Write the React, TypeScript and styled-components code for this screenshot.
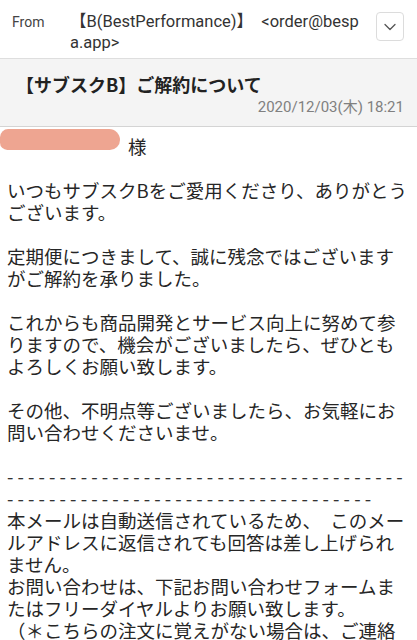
import React from "react"
import styled, { createGlobalStyle } from "styled-components"

const GlobalStyle = createGlobalStyle`
  html, body {
    margin: 0;
    padding: 0;
    background: #fff;
  }
  body {
    font-family: Roboto, "Noto Sans CJK JP", sans-serif;
    color: #222;
  }
`

const Page = styled.div`
  width: 417px;
  height: 640px;
  overflow: hidden;
  background: #fff;
`

const Header = styled.div`
  display: flex;
  align-items: flex-start;
  padding: 11px 13px 5px 12px;
  border-bottom: 1px solid #dedede;
`

const FromLabel = styled.div`
  width: 58px;
  flex-shrink: 0;
  font-size: 14px;
  line-height: 21px;
  margin-top: 1px;
  color: #444;
`

const Sender = styled.div`
  flex: 1;
  font-size: 16.5px;
  line-height: 21px;
  color: #333;
  white-space: pre;
`

const ToggleButton = styled.button`
  width: 28px;
  height: 29px;
  margin-top: 1px;
  padding: 0;
  border: 1px solid #dcdcdc;
  border-radius: 4px;
  background: #fff;
  display: flex;
  align-items: center;
  justify-content: center;
`

const SubjectBlock = styled.div`
  background: #f4f4f4;
  border-bottom: 1px solid #d4d4d4;
  padding: 12px 13px 9px 16px;
`

const Subject = styled.div`
  font-family: "Noto Sans CJK JP", sans-serif;
  font-size: 18px;
  font-weight: 700;
  line-height: 26px;
  color: #222;
`

const DateLine = styled.div`
  text-align: right;
  font-size: 15px;
  line-height: 20px;
  color: #808080;
`

const Body = styled.div`
  padding: 8px 0 0 7px;
  font-family: "Noto Sans CJK JP", sans-serif;
  font-size: 18.5px;
  color: #262626;
`

const Para = styled.p<{ $gap?: number }>`
  margin: 0 0 ${p => p.$gap ?? 22}px 0;
  line-height: 22px;
  white-space: nowrap;
`

const Redacted = styled.span`
  display: inline-block;
  width: 120px;
  height: 21px;
  margin: -6px 8px 4px -7px;
  background: #eea591;
  border-radius: 9px 12px 11px 8px;
`

const Dashes = styled.div`
  line-height: 22px;
  letter-spacing: 4.1px;
  color: #333;
  white-space: nowrap;
`

const dash = (n: number) => "-".repeat(n)

const App: React.FC = () => {
  return (
    <Page>
      <GlobalStyle />
      <Header>
        <FromLabel>From</FromLabel>
        <Sender>
          {"【B(BestPerformance)】  <order@besp"}
          <br />
          {"a.app>"}
        </Sender>
        <ToggleButton aria-label="詳細">
          <svg width="14" height="14" viewBox="0 0 14 14" fill="none">
            <path d="M2 4.5 L7 9.5 L12 4.5" stroke="#555" strokeWidth="1.3" strokeLinecap="round" strokeLinejoin="round" />
          </svg>
        </ToggleButton>
      </Header>
      <SubjectBlock>
        <Subject>【サブスクB】ご解約について</Subject>
        <DateLine>2020/12/03(木) 18:21</DateLine>
      </SubjectBlock>
      <Body>
        <Para>
          <Redacted />様
        </Para>
        <Para>
          いつもサブスクBをご愛用くださり、ありがとう
          <br />
          ございます。
        </Para>
        <Para>
          定期便につきまして、誠に残念ではございます
          <br />
          がご解約を承りました。
        </Para>
        <Para>
          これからも商品開発とサービス向上に努めて参
          <br />
          りますので、機会がございましたら、ぜひとも
          <br />
          よろしくお願い致します。
        </Para>
        <Para>
          その他、不明点等ございましたら、お気軽にお
          <br />
          問い合わせくださいませ。
        </Para>
        <Dashes>
          {dash(38)}
          <br />
          {dash(35)}
        </Dashes>
        <Para $gap={0}>
          本メールは自動送信されているため、　このメー
          <br />
          ルアドレスに返信されても回答は差し上げられ
          <br />
          ません。
          <br />
          お問い合わせは、下記お問い合わせフォームま
          <br />
          たはフリーダイヤルよりお願い致します。
          <br />
          （＊こちらの注文に覚えがない場合は、ご連絡
        </Para>
      </Body>
    </Page>
  )
}

export default App
